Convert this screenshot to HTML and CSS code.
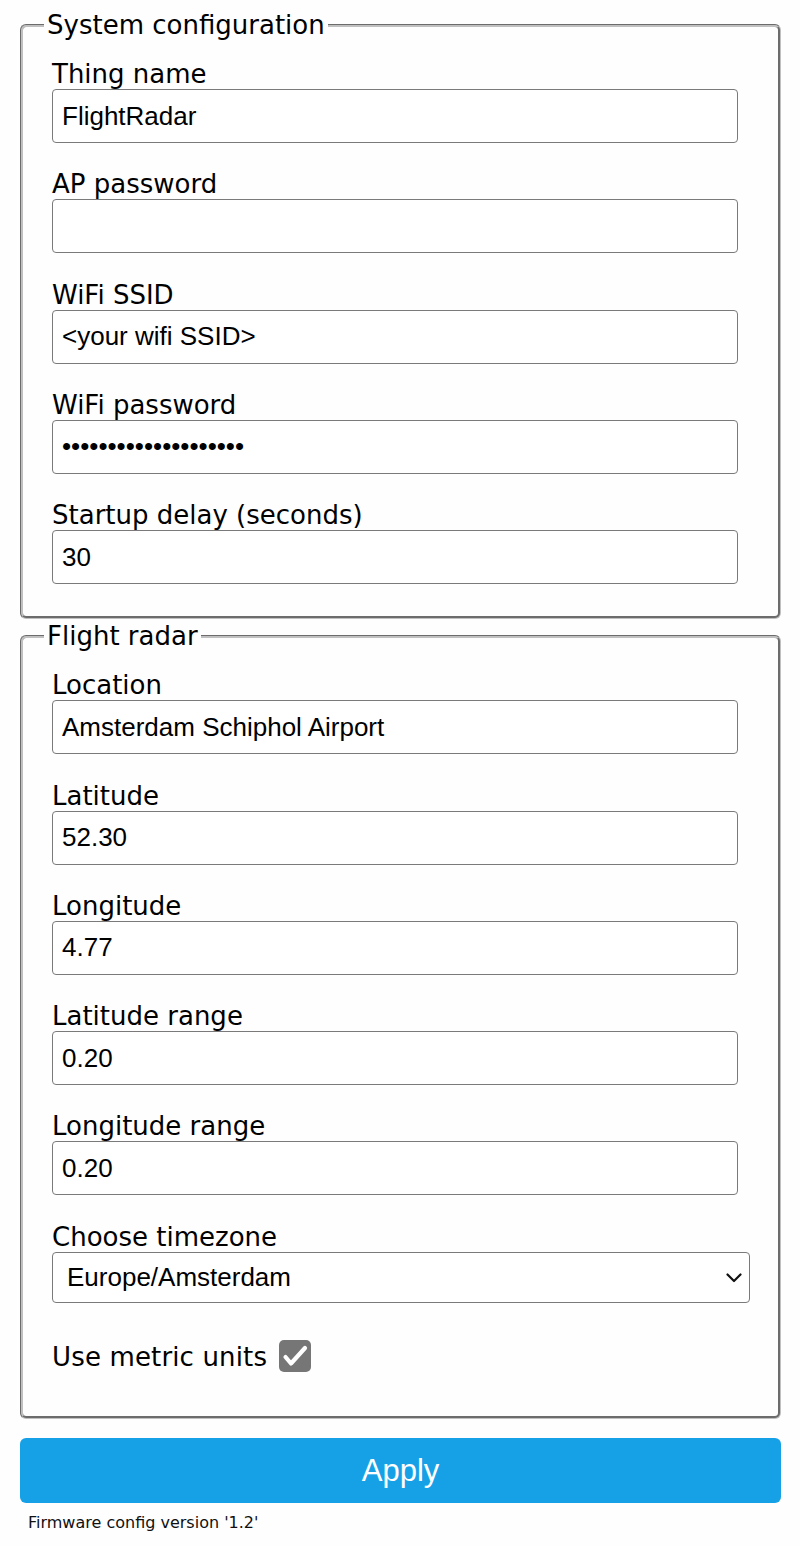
FILE: index.html
```html
<!DOCTYPE html>
<html>
<head>
<meta charset="utf-8">
<title>Config</title>
<link rel="stylesheet" href="styles.css">
</head>
<body>
<div class="wrap">
<form class="form" action="#" method="post">
  <fieldset class="group group-first">
    <legend class="legend">System configuration</legend>
    <div class="field">
      <label class="label" for="iwcThingName">Thing name</label>
      <input class="text" type="text" id="iwcThingName" value="FlightRadar">
    </div>
    <div class="field">
      <label class="label" for="iwcApPassword">AP password</label>
      <input class="text" type="password" id="iwcApPassword" value="">
    </div>
    <div class="field">
      <label class="label" for="iwcWifiSsid">WiFi SSID</label>
      <input class="text" type="text" id="iwcWifiSsid" value="&lt;your wifi SSID&gt;">
    </div>
    <div class="field">
      <label class="label" for="iwcWifiPassword">WiFi password</label>
      <input class="text" type="password" id="iwcWifiPassword" value="abcdefghijklmnopqrst">
    </div>
    <div class="field">
      <label class="label" for="iwcApTimeout">Startup delay (seconds)</label>
      <input class="text" type="text" id="iwcApTimeout" value="30">
    </div>
  </fieldset>
  <fieldset class="group group-second">
    <legend class="legend">Flight radar</legend>
    <div class="field">
      <label class="label" for="location">Location</label>
      <input class="text" type="text" id="location" value="Amsterdam Schiphol Airport">
    </div>
    <div class="field">
      <label class="label" for="lat">Latitude</label>
      <input class="text" type="text" id="lat" value="52.30">
    </div>
    <div class="field">
      <label class="label" for="lon">Longitude</label>
      <input class="text" type="text" id="lon" value="4.77">
    </div>
    <div class="field">
      <label class="label" for="latr">Latitude range</label>
      <input class="text" type="text" id="latr" value="0.20">
    </div>
    <div class="field">
      <label class="label" for="lonr">Longitude range</label>
      <input class="text" type="text" id="lonr" value="0.20">
    </div>
    <div class="field">
      <label class="label" for="tz">Choose timezone</label>
      <div class="select-wrap">
        <select class="select" id="tz">
          <option>Europe/Amsterdam</option>
        </select>
        <svg class="chevron" width="16" height="10" viewBox="0 0 16 10" aria-hidden="true"><path d="M1.5 1.5 L8 8 L14.5 1.5" fill="none" stroke="#111" stroke-width="2.2" stroke-linecap="round" stroke-linejoin="round"/></svg>
      </div>
    </div>
    <div class="field field-check">
      <label class="check-label" for="metric">Use metric units</label>
      <span class="checkbox" id="metric" role="checkbox" aria-checked="true">
        <svg width="32" height="32" viewBox="0 0 32 32" aria-hidden="true"><path d="M6.5 17 L12 23.5 L26 8" fill="none" stroke="#fff" stroke-width="4.2" stroke-linecap="round" stroke-linejoin="round"/></svg>
      </span>
    </div>
  </fieldset>
  <button class="apply" type="submit">Apply</button>
</form>
<div class="version">Firmware config version '1.2'</div>
</div>
</body>
</html>
```
FILE: styles.css
```css
html, body {
  margin: 0;
  padding: 0;
  background: #fefefe;
}
body {
  font-family: "DejaVu Sans", Verdana, sans-serif;
  color: #000;
}
.wrap {
  padding: 10px 19px 0 20px;
}
.form {
  margin: 0;
}
.group {
  margin: 0;
  border: 3px groove #c0c0c0;
  border-radius: 6px;
  padding: 11px 21px 13px 21px;
  min-width: 0;
}
.group-first {
  padding-bottom: 14px;
}
.group-second {
  margin-top: 2px;
}
.legend {
  font-size: 26px;
  line-height: 30px;
  padding: 0 3px;
}
.field {
  padding: 8px;
  display: flex;
  flex-direction: column;
}
.label {
  font-size: 26px;
  line-height: 30px;
  height: 30px;
}
.text {
  box-sizing: border-box;
  width: calc(100% - 11px);
  height: 54px;
  margin: 0 0 10.25px 0;
  border: 1.5px solid #7a7a7a;
  border-radius: 4px;
  padding: 0 9px;
  font-family: "Liberation Sans", Arial, sans-serif;
  font-size: 26px;
  color: #000;
  background: #fff;
  outline: none;
}
.select-wrap {
  position: relative;
  width: calc(100% + 1px);
  margin-bottom: 10.25px;
}
.select {
  box-sizing: border-box;
  width: 100%;
  height: 51px;
  margin: 0;
  border: 1.5px solid #7a7a7a;
  border-radius: 4px;
  padding: 0 14px;
  font-family: "Liberation Sans", Arial, sans-serif;
  font-size: 26px;
  color: #000;
  background: #fff;
  -webkit-appearance: none;
  appearance: none;
}
.chevron {
  position: absolute;
  right: 8px;
  top: 21px;
  pointer-events: none;
}
.field-check {
  flex-direction: row;
  align-items: center;
  height: 52px;
  padding-top: 10px;
  padding-bottom: 20px;
}
.check-label {
  font-size: 26px;
  line-height: 30px;
  letter-spacing: 0.15px;
}
.checkbox {
  display: inline-flex;
  width: 32px;
  height: 32px;
  margin-left: 12px;
  margin-top: -2px;
  border-radius: 5px;
  background: #767676;
}
.apply {
  display: block;
  box-sizing: border-box;
  width: 100%;
  height: 65px;
  margin: 19px 0 0 0;
  border: 0;
  border-radius: 6px;
  background: #16a1e7;
  color: #fff;
  font-family: "Liberation Sans", Arial, sans-serif;
  font-size: 31px;
  line-height: 65px;
  padding: 0;
}
.version {
  font-size: 16px;
  line-height: 19px;
  padding: 10px 8px 8px 8px;
  color: #111;
}
```
